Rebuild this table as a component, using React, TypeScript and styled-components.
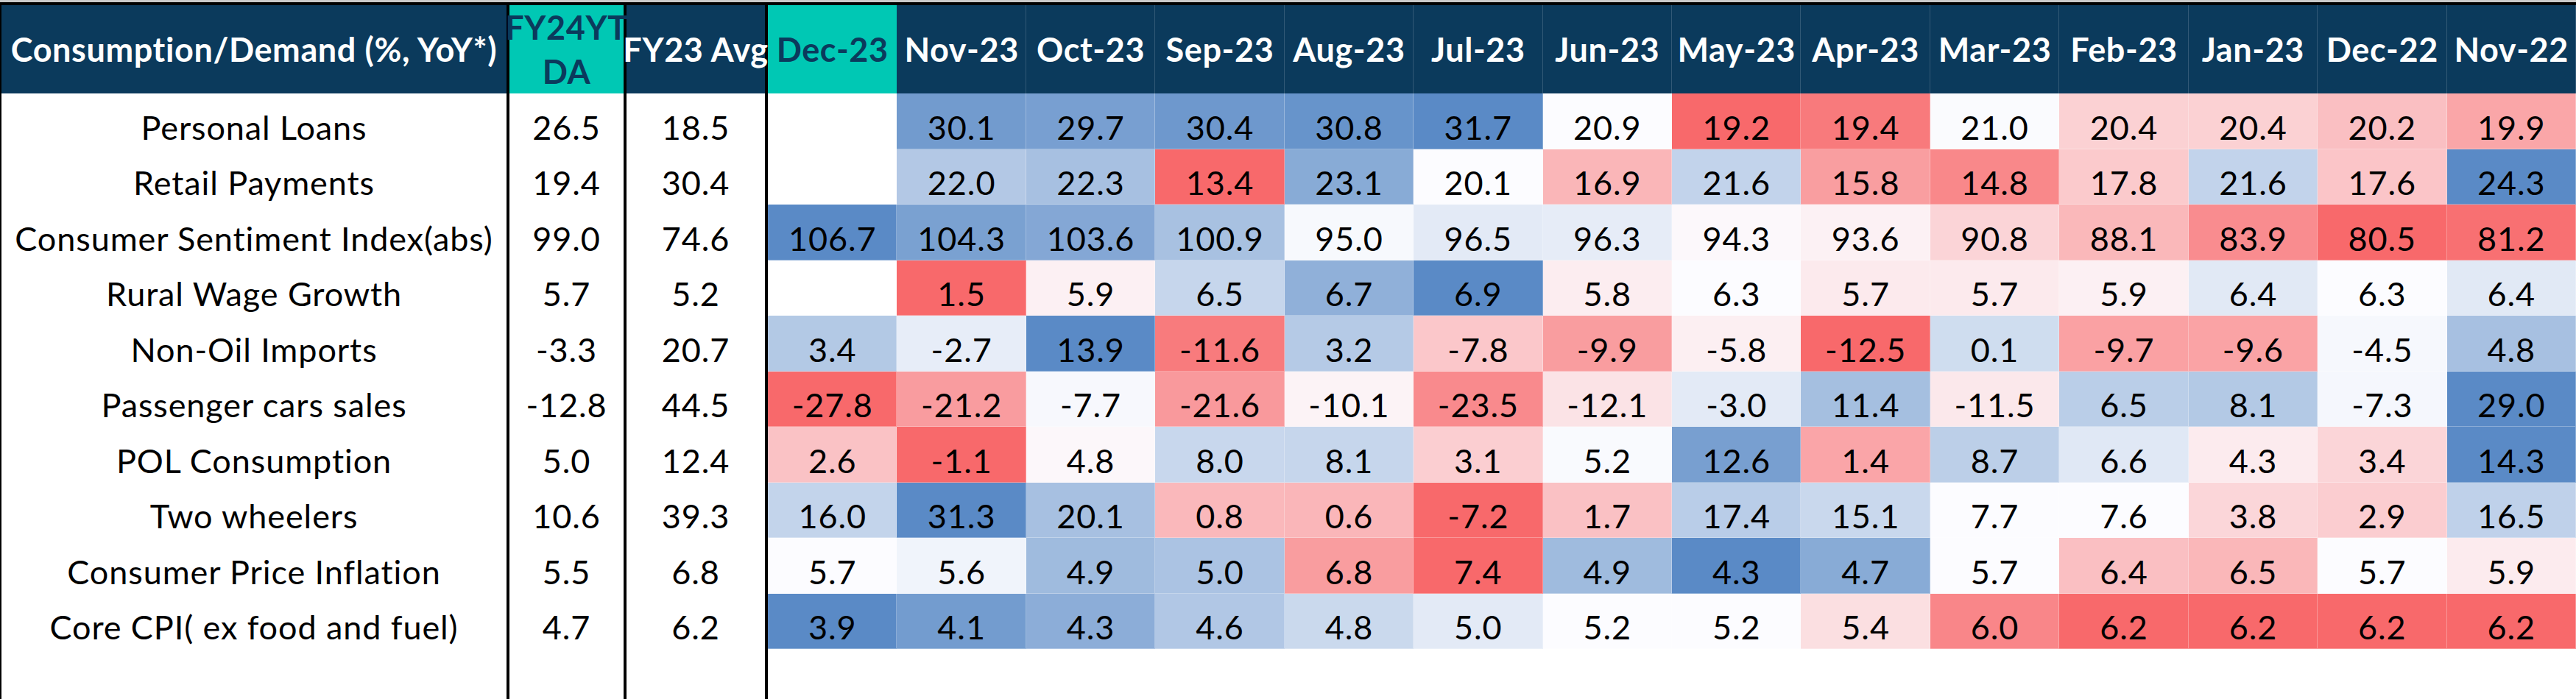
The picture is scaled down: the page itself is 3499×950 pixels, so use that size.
import React from "react";
import styled, { createGlobalStyle } from "styled-components";

const NAVY = "#0b3a5c";
const TEAL = "#00c8b4";

const RED = [248, 105, 107];
const MID = [252, 252, 255];
const BLUE = [90, 138, 198];

const months = [
  "Dec-23",
  "Nov-23",
  "Oct-23",
  "Sep-23",
  "Aug-23",
  "Jul-23",
  "Jun-23",
  "May-23",
  "Apr-23",
  "Mar-23",
  "Feb-23",
  "Jan-23",
  "Dec-22",
  "Nov-22",
];

type Row = {
  label: string;
  ytd: number;
  avg: number;
  values: (number | null)[];
  invert?: boolean;
};

const rows: Row[] = [
  { label: "Personal Loans", ytd: 26.5, avg: 18.5, values: [null, 30.1, 29.7, 30.4, 30.8, 31.7, 20.9, 19.2, 19.4, 21.0, 20.4, 20.4, 20.2, 19.9] },
  { label: "Retail Payments", ytd: 19.4, avg: 30.4, values: [null, 22.0, 22.3, 13.4, 23.1, 20.1, 16.9, 21.6, 15.8, 14.8, 17.8, 21.6, 17.6, 24.3] },
  { label: "Consumer Sentiment Index(abs)", ytd: 99.0, avg: 74.6, values: [106.7, 104.3, 103.6, 100.9, 95.0, 96.5, 96.3, 94.3, 93.6, 90.8, 88.1, 83.9, 80.5, 81.2] },
  { label: "Rural Wage Growth", ytd: 5.7, avg: 5.2, values: [null, 1.5, 5.9, 6.5, 6.7, 6.9, 5.8, 6.3, 5.7, 5.7, 5.9, 6.4, 6.3, 6.4] },
  { label: "Non-Oil Imports", ytd: -3.3, avg: 20.7, values: [3.4, -2.7, 13.9, -11.6, 3.2, -7.8, -9.9, -5.8, -12.5, 0.1, -9.7, -9.6, -4.5, 4.8] },
  { label: "Passenger cars sales", ytd: -12.8, avg: 44.5, values: [-27.8, -21.2, -7.7, -21.6, -10.1, -23.5, -12.1, -3.0, 11.4, -11.5, 6.5, 8.1, -7.3, 29.0] },
  { label: "POL Consumption", ytd: 5.0, avg: 12.4, values: [2.6, -1.1, 4.8, 8.0, 8.1, 3.1, 5.2, 12.6, 1.4, 8.7, 6.6, 4.3, 3.4, 14.3] },
  { label: "Two wheelers", ytd: 10.6, avg: 39.3, values: [16.0, 31.3, 20.1, 0.8, 0.6, -7.2, 1.7, 17.4, 15.1, 7.7, 7.6, 3.8, 2.9, 16.5] },
  { label: "Consumer Price Inflation", ytd: 5.5, avg: 6.8, invert: true, values: [5.7, 5.6, 4.9, 5.0, 6.8, 7.4, 4.9, 4.3, 4.7, 5.7, 6.4, 6.5, 5.7, 5.9] },
  { label: "Core CPI( ex food and fuel)", ytd: 4.7, avg: 6.2, invert: true, values: [3.9, 4.1, 4.3, 4.6, 4.8, 5.0, 5.2, 5.2, 5.4, 6.0, 6.2, 6.2, 6.2, 6.2] },
];

// excel style 3-colour scale: min / 50th percentile / max
function mix(a: number[], b: number[], t: number) {
  const c = a.map((v, i) => Math.round(v + (b[i] - v) * t));
  return `rgb(${c[0]}, ${c[1]}, ${c[2]})`;
}

function scale(row: Row) {
  const nums = row.values.filter((v): v is number => v !== null);
  const sorted = [...nums].sort((a, b) => a - b);
  const n = sorted.length;
  const mid = n % 2 ? sorted[(n - 1) / 2] : (sorted[n / 2 - 1] + sorted[n / 2]) / 2;
  const min = sorted[0];
  const max = sorted[n - 1];
  const low = row.invert ? BLUE : RED;
  const high = row.invert ? RED : BLUE;
  return (v: number | null) => {
    if (v === null) return "#ffffff";
    if (v <= mid) return mix(low, MID, mid === min ? 1 : (v - min) / (mid - min));
    return mix(MID, high, (v - mid) / (max - mid));
  };
}

const GlobalStyle = createGlobalStyle`
  html, body {
    margin: 0;
    padding: 0;
    background: #ffffff;
  }
  body {
    font-family: Lato, "Liberation Sans", sans-serif;
  }
`;

const TopRule = styled.div`
  height: 3px;
  background: #c9c9c9;
`;

const Sheet = styled.div`
  box-sizing: border-box;
  height: calc(100vh - 3px);
  border-top: 4px solid #000;
  display: grid;
  grid-template-columns: 692px 159px 192px repeat(14, minmax(0, 1fr));
  grid-template-rows: 120px repeat(10, 75.5px) 1fr;
`;

type Rule = "first" | "fy";

const Cell = styled.div<{ $rule?: Rule }>`
  box-sizing: border-box;
  min-width: 0;
  display: flex;
  justify-content: center;
  white-space: nowrap;
  ${({ $rule }) =>
    $rule === "first"
      ? "border-left: 2px solid #000; border-right: 4px solid #000;"
      : $rule === "fy"
      ? "border-right: 4px solid #000;"
      : ""}
`;

const HeadCell = styled(Cell)<{ $teal?: boolean; $divider?: boolean }>`
  align-items: center;
  text-align: center;
  background: ${({ $teal }) => ($teal ? TEAL : NAVY)};
  color: ${({ $teal }) => ($teal ? NAVY : "#ffffff")};
  font-size: 45px;
  font-weight: 700;
  line-height: 60px;
  letter-spacing: 0.6px;
  box-shadow: ${({ $divider }) => ($divider ? "inset -1px 0 0 rgba(255, 255, 255, 0.16)" : "none")};
`;

const BodyCell = styled(Cell)<{ $bg?: string }>`
  align-items: flex-end;
  padding-bottom: 4px;
  background: ${({ $bg }) => $bg || "#ffffff"};
  color: #000;
  font-size: 45px;
  line-height: 52px;
  letter-spacing: 0.9px;
  box-shadow: ${({ $bg }) => ($bg ? "inset -1px -1px 0 rgba(255, 255, 255, 0.3)" : "none")};
`;

const Filler = styled(Cell)<{ $span?: number }>`
  background: #ffffff;
  ${({ $span }) => ($span ? `grid-column: span ${$span};` : "")}
`;

export default function App() {
  return (
    <>
      <GlobalStyle />
      <TopRule />
      <Sheet>
        <HeadCell $rule="first">Consumption/Demand (%, YoY*)</HeadCell>
        <HeadCell $rule="fy" $teal>
          FY24YT
          <br />
          DA
        </HeadCell>
        <HeadCell $rule="fy">FY23 Avg</HeadCell>
        {months.map((m, i) => (
          <HeadCell key={m} $teal={i === 0} $divider={i > 0}>
            {m}
          </HeadCell>
        ))}

        {rows.map((row) => {
          const color = scale(row);
          return (
            <React.Fragment key={row.label}>
              <BodyCell $rule="first">{row.label}</BodyCell>
              <BodyCell $rule="fy">{row.ytd.toFixed(1)}</BodyCell>
              <BodyCell $rule="fy">{row.avg.toFixed(1)}</BodyCell>
              {row.values.map((v, i) => (
                <BodyCell key={months[i]} $bg={v === null ? undefined : color(v)}>
                  {v === null ? "" : v.toFixed(1)}
                </BodyCell>
              ))}
            </React.Fragment>
          );
        })}

        <Filler $rule="first" />
        <Filler $rule="fy" />
        <Filler $rule="fy" />
        <Filler $span={14} />
      </Sheet>
    </>
  );
}
